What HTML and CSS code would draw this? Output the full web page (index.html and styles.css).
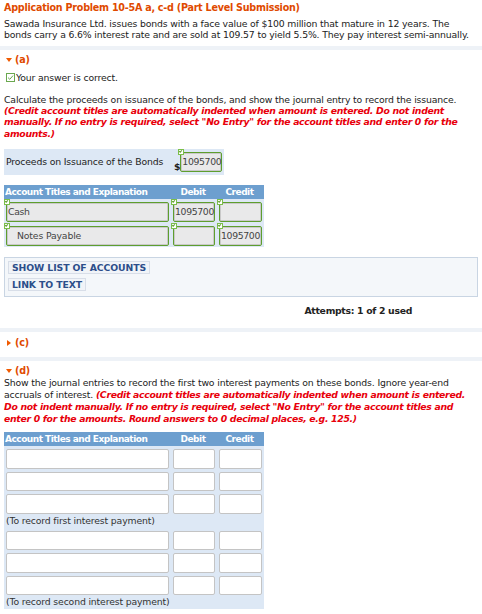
FILE: index.html
```html
<!DOCTYPE html>
<html>
<head>
<meta charset="utf-8">
<title>Application Problem 10-5A</title>
<link rel="stylesheet" href="styles.css">
</head>
<body>
<div class="intro">
  <h1 class="title">Application Problem 10-5A a, c-d (Part Level Submission)</h1>
  <p class="text">Sawada Insurance Ltd. issues bonds with a face value of $100 million that mature in 12 years. The bonds carry a 6.6% interest rate and are sold at 109.57 to yield 5.5%. They pay interest semi-annually.</p>
</div>

<div class="band"></div>

<section class="part">
  <h2 class="part-head"><span class="tri-down"></span>(a)</h2>
  <p class="correct"><span class="checkbox"><svg width="9" height="9" viewBox="0 0 9 9"><rect x="0.5" y="0.5" width="8" height="8" fill="#fff" stroke="#6aa84f"/><path d="M2 4.6 L3.8 6.3 L7 2.6" fill="none" stroke="#6aa84f" stroke-width="1"/></svg></span>Your answer is correct.</p>
  <p class="text">Calculate the proceeds on issuance of the bonds, and show the journal entry to record the issuance. <em class="note">(Credit account titles are automatically indented when amount is entered. Do not indent manually. If no entry is required, select "No Entry" for the account titles and enter 0 for the amounts.)</em></p>

  <div class="proceeds">
    <span class="proceeds-label">Proceeds on Issuance of the Bonds</span>
    <span class="dollar">$</span>
    <span class="field ok mark">1095700</span>
  </div>

  <div class="journal">
    <div class="jhead">
      <span>Account Titles and Explanation</span>
      <span class="num">Debit</span>
      <span class="num">Credit</span>
    </div>
    <div class="jrow">
      <span class="field ok mark">Cash</span>
      <span class="field ok mark">1095700</span>
      <span class="field ok mark"></span>
    </div>
    <div class="jrow">
      <span class="field ok mark indent">Notes Payable</span>
      <span class="field ok mark"></span>
      <span class="field ok mark">1095700</span>
    </div>
  </div>

  <div class="links">
    <span class="link-btn">SHOW LIST OF ACCOUNTS</span>
    <span class="link-btn">LINK TO TEXT</span>
  </div>

  <p class="attempts">Attempts: 1 of 2 used</p>
</section>

<div class="band"></div>

<section class="part collapsed">
  <h2 class="part-head"><span class="tri-right"></span>(c)</h2>
</section>

<div class="band"></div>

<section class="part">
  <h2 class="part-head"><span class="tri-down"></span>(d)</h2>
  <p class="text loose">Show the journal entries to record the first two interest payments on these bonds. Ignore year-end accruals of interest. <em class="note">(Credit account titles are automatically indented when amount is entered. Do not indent manually. If no entry is required, select "No Entry" for the account titles and enter 0 for the amounts. Round answers to 0 decimal places, e.g. 125.)</em></p>

  <div class="journal blank">
    <div class="jhead">
      <span>Account Titles and Explanation</span>
      <span class="num">Debit</span>
      <span class="num">Credit</span>
    </div>
    <div class="jrow"><span class="field"></span><span class="field"></span><span class="field"></span></div>
    <div class="jrow"><span class="field"></span><span class="field"></span><span class="field"></span></div>
    <div class="jrow"><span class="field"></span><span class="field"></span><span class="field"></span></div>
    <div class="jcaption">(To record first interest payment)</div>
    <div class="jrow"><span class="field"></span><span class="field"></span><span class="field"></span></div>
    <div class="jrow"><span class="field"></span><span class="field"></span><span class="field"></span></div>
    <div class="jrow"><span class="field"></span><span class="field"></span><span class="field"></span></div>
    <div class="jcaption">(To record second interest payment)</div>
  </div>
</section>
</body>
</html>
```

FILE: styles.css
```css
* { box-sizing: border-box; }

body {
  margin: 0;
  font-family: "DejaVu Sans", Verdana, sans-serif;
  font-size: 9.3px;
  letter-spacing: -0.15px;
  line-height: 11.3px;
  color: #222;
  background: #fff;
}

p, h1, h2 { margin: 0; }

.intro { padding: 2px 4px 5px; }

.title {
  font-size: 9.6px;
  letter-spacing: -0.25px;
  font-weight: bold;
  color: #e04a00;
  line-height: 12px;
  margin-bottom: 4px;
}

.text.loose { line-height: 12px; }

.band {
  height: 4px;
  background: #eef2f7;
}

.part { padding: 0 4px; }
.part.collapsed { padding-bottom: 8px; }
.part.collapsed .part-head { padding-top: 5px; }

.part-head {
  font-size: 9.6px;
  letter-spacing: -0.2px;
  font-weight: bold;
  color: #e04a00;
  line-height: 12px;
  padding: 4px 0 0 2px;
  display: flex;
  align-items: center;
  gap: 3px;
}

.tri-down {
  width: 0; height: 0;
  border-left: 3.5px solid transparent;
  border-right: 3.5px solid transparent;
  border-top: 4px solid #f05a00;
}

.tri-right {
  width: 0; height: 0;
  border-top: 3.5px solid transparent;
  border-bottom: 3.5px solid transparent;
  border-left: 4px solid #f05a00;
  margin: 0 1px 0 1px;
}

.correct {
  display: flex;
  align-items: center;
  gap: 1px;
  padding: 6px 0 0 2px;
  margin-bottom: 11px;
}
.checkbox { display: inline-flex; }

.note {
  color: #e8000b;
  font-weight: bold;
  font-style: italic;
  letter-spacing: -0.3px;
}

.proceeds {
  margin-top: 10px;
  width: 220px;
  height: 26px;
  background: #dde8f5;
  display: flex;
  align-items: center;
  padding-left: 2px;
}
.proceeds-label { width: 168px; }
.dollar { align-self: flex-end; margin-bottom: 3px; font-weight: bold; }
.proceeds .field { width: 42px; height: 20px; }

.field {
  position: relative;
  display: flex;
  align-items: center;
  height: 20px;
  padding: 0 2px;
  background: #fff;
  border: 1px solid #c4c4c4;
  border-radius: 2px;
  color: #444;
  white-space: nowrap;
}
.field.ok {
  background: #e9e9ea;
  border: 1px solid #5e9e2e;
  box-shadow: inset 0 0 0 1px #c9c9c9;
  padding: 0 1px;
  letter-spacing: -0.35px;
}
.field.indent { padding-left: 10px; letter-spacing: -0.15px; }

/* little green validation tick at the corner of a checked field */
.field.mark::before {
  content: "";
  position: absolute;
  left: -3px;
  top: -4px;
  width: 4px;
  height: 4px;
  background: #fff;
  border: 1px solid #7cbf4a;
}
.field.mark::after {
  content: "";
  position: absolute;
  left: -2px;
  top: -3px;
  width: 2px;
  height: 1px;
  border-left: 1px solid #5e9e2e;
  border-bottom: 1px solid #5e9e2e;
  transform: rotate(-45deg);
}

.journal {
  margin-top: 10px;
  width: 260px;
  background: #dde8f5;
}
.journal.blank { margin-top: 7px; }
.jhead, .jrow {
  display: grid;
  grid-template-columns: 163px 42px 43px;
  column-gap: 4px;
  padding-left: 2px;
}
.jhead {
  background: #6d9fcf;
  color: #fff;
  font-weight: bold;
  font-size: 9px;
  letter-spacing: -0.5px;
  height: 14px;
  line-height: 14px;
  padding-left: 1px;
  white-space: nowrap;
}
.jhead .num { text-align: center; }
.jrow { padding-top: 3px; padding-bottom: 1px; }
.journal.blank .jrow { padding-top: 3px; padding-bottom: 0; }
.journal.blank .field { height: 19.5px; }
.jcaption {
  padding: 1px 0 1px 2px;
  line-height: 12px;
  color: #333;
}

.links {
  margin-top: 10px;
  border: 1px solid #c9d5e3;
  background: #f4f7fa;
  padding: 3px 3px 5px;
  display: flex;
  flex-direction: column;
  align-items: flex-start;
  gap: 4px;
}
.link-btn {
  font-weight: bold;
  color: #2c4e8a;
  border: 1px solid #d8dee8;
  background: #f1f4f8;
  padding: 0 3px;
  line-height: 11px;
  letter-spacing: -0.1px;
}

.attempts {
  font-weight: bold;
  letter-spacing: -0.3px;
  text-align: right;
  padding: 8px 66px 0 0;
  height: 31px;
}
```
